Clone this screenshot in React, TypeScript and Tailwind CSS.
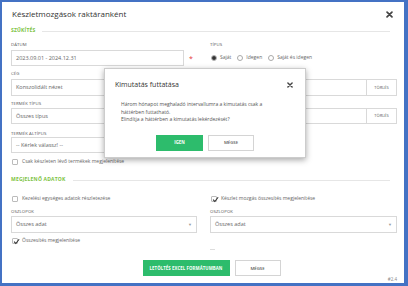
import React from "react";

const Label = ({ children }: { children: React.ReactNode }) => (
  <div className="h-[6px] flex items-center text-[4.3px] uppercase text-[#555] tracking-[0.1px]">{children}</div>
);

const SectionTitle = ({ children }: { children: React.ReactNode }) => (
  <div className="h-[10px] flex items-center gap-[7px] pr-[7px]">
    <span className="text-[5px] font-bold text-[#7cc242] tracking-[0.2px]">{children}</span>
    <div className="flex-1 h-px bg-[#e6e6e6]" />
  </div>
);

const Checkbox = ({ checked, label }: { checked?: boolean; label: string }) => (
  <div className="h-[8px] flex items-center gap-[4px] pl-[1px]">
    <div className="relative w-[6px] h-[6px] border border-[#bbb] rounded-[1px] bg-white">
      {checked && (
        <svg viewBox="0 0 10 10" className="absolute left-[-0.5px] top-[-1px] w-[7px] h-[7px]">
          <path d="M1.5 5.2 L4 7.8 L8.8 1.8" fill="none" stroke="#333" strokeWidth="1.5" />
        </svg>
      )}
    </div>
    <span className="text-[5px] text-[#666]">{label}</span>
  </div>
);

const Radio = ({ checked, label }: { checked?: boolean; label: string }) => (
  <div className="flex items-center gap-[3px]">
    <div className="w-[6px] h-[6px] rounded-full border border-[#aaa] flex items-center justify-center bg-white">
      {checked && <div className="w-[4px] h-[4px] rounded-full bg-[#333]" />}
    </div>
    <span className="text-[5px] text-[#666]">{label}</span>
  </div>
);

const Input = ({ value, h = "h-[16px]", clear }: { value: string; h?: string; clear?: boolean }) => (
  <div className={`${h} flex border border-[#d9d9d9] bg-white`}>
    <div className="flex-1 flex items-center px-[4px] text-[5.5px] text-[#666]">{value}</div>
    {clear && (
      <div className="w-[30px] border-l border-[#d9d9d9] flex items-center justify-center text-[4px] text-[#555]">
        TÖRLÉS
      </div>
    )}
  </div>
);

const Select = ({ value }: { value: string }) => (
  <div className="h-[17px] flex items-center justify-between border border-[#d9d9d9] bg-white px-[4px]">
    <span className="text-[5.5px] text-[#666]">{value}</span>
    <span className="text-[4px] text-[#999]">▼</span>
  </div>
);

const CloseX = ({ size = 7 }: { size?: number }) => (
  <svg viewBox="0 0 10 10" width={size} height={size}>
    <path d="M1.5 1.5 L8.5 8.5 M8.5 1.5 L1.5 8.5" stroke="#444" strokeWidth="2.4" strokeLinecap="round" />
  </svg>
);

const App: React.FC = () => {
  return (
    <div
      className="relative w-[408px] h-[286px] overflow-hidden bg-white border-t-2 border-l-2 border-r-[4px] border-b-[3px] border-[#4472c4]"
      style={{ fontFamily: '"Open Sans", "Liberation Sans", sans-serif' }}
    >
      <div className="pl-[9px] pr-[7px]">
        {/* Header */}
        <div className="h-[24px] flex items-center justify-between pl-[1px] pr-[4px]">
          <h1 className="text-[8px] text-[#333]">Készletmozgások raktáranként</h1>
          <CloseX />
        </div>

        <SectionTitle>SZŰKÍTÉS</SectionTitle>

        {/* Dátum + Típus */}
        <div className="grid grid-cols-[186px_187px] gap-x-[13px] mt-[5px]">
          <div>
            <Label>Dátum</Label>
            <div className="mt-[3px] flex items-center">
              <div className="w-[173px]">
                <Input value="2023.09.01 - 2024.12.31" />
              </div>
              <span className="ml-[5px] text-[7px] text-[#e53935] leading-none">*</span>
            </div>
          </div>
          <div>
            <Label>Típus</Label>
            <div className="mt-[3px] h-[16px] flex items-center gap-[6px] pl-[1px]">
              <Radio checked label="Saját" />
              <Radio label="Idegen" />
              <Radio label="Saját és idegen" />
            </div>
          </div>
        </div>

        <div className="mt-[4px]">
          <Label>Cég</Label>
          <div className="mt-[3px]">
            <Input value="Konszolidált nézet" h="h-[17px]" clear />
          </div>
        </div>

        <div className="mt-[4px]">
          <Label>Termék típus</Label>
          <div className="mt-[2px]">
            <Input value="Összes típus" clear />
          </div>
        </div>

        <div className="mt-[6px] w-[186px]">
          <Label>Termék altípus</Label>
          <div className="mt-[1px]">
            <Input value="-- Kérlek válassz! --" />
          </div>
        </div>

        <div className="mt-[5px]">
          <Checkbox label="Csak készleten lévő termékek megjelenítése" />
        </div>

        <div className="mt-[9px]">
          <SectionTitle>MEGJELENŐ ADATOK</SectionTitle>
        </div>

        <div className="grid grid-cols-[186px_187px] gap-x-[13px] mt-[10px]">
          <div>
            <Checkbox label="Kezelési egységes adatok részletezése" />
            <div className="mt-[5px]">
              <Label>Oszlopok</Label>
            </div>
            <div className="mt-[2px]">
              <Select value="Összes adat" />
            </div>
            <div className="mt-[4px]">
              <Checkbox checked label="Összesítés megjelenítése" />
            </div>
          </div>
          <div>
            <Checkbox checked label="Készlet mozgás összesítés megjelenítése" />
            <div className="mt-[5px]">
              <Label>Oszlopok</Label>
            </div>
            <div className="mt-[2px]">
              <Select value="Összes adat" />
            </div>
            <div className="mt-[16px] w-[5px] h-px bg-[#ddd]" />
          </div>
        </div>

        {/* Footer buttons */}
        <div className="mt-[10px] flex justify-center gap-[5px] pl-[15px]">
          <button className="w-[87px] h-[16px] bg-[#2dbc6c] text-white text-[4.3px] font-bold tracking-[0.1px]">
            LETÖLTÉS EXCEL FORMÁTUMBAN
          </button>
          <button className="w-[46px] h-[16px] bg-white border border-[#d4d4d4] text-[#555] text-[4.3px] font-semibold">
            MÉGSE
          </button>
        </div>
        <div className="h-[6px] flex items-center justify-end text-[4.5px] text-[#888]">#2.4</div>
      </div>

      {/* Confirmation dialog */}
      <div className="absolute left-[102px] top-[66px] w-[202px] h-[90px] bg-white border border-[#ccc] shadow-[0_2px_6px_rgba(0,0,0,0.35)]">
        <div className="h-[32px] flex items-center justify-between pl-[10px] pr-[12px]">
          <span className="text-[7px] text-[#333]">Kimutatás futtatása</span>
          <CloseX size={6} />
        </div>
        <div className="pl-[16px] text-[5px] leading-[7.5px] text-[#555]">
          <div>Három hónapot meghaladó intervallumra a kimutatás csak a</div>
          <div>háttérben futtatható.</div>
          <div>Elindítja a háttérben a kimutatás lekérdezését?</div>
        </div>
        <div className="mt-[11px] flex justify-center gap-[5px]">
          <button className="w-[47px] h-[16px] bg-[#2dbc6c] text-white text-[4.3px] font-bold">IGEN</button>
          <button className="w-[46px] h-[16px] bg-white border border-[#d4d4d4] text-[#555] text-[4.3px] font-semibold">
            MÉGSE
          </button>
        </div>
      </div>
    </div>
  );
};

export default App;
